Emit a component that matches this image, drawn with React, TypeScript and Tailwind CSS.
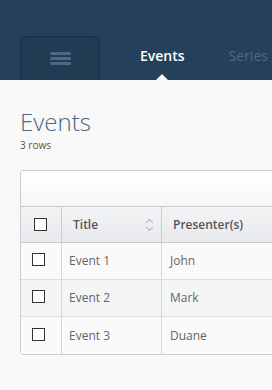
import React from 'react';

const rows = [
  { title: 'Event 1', presenter: 'John' },
  { title: 'Event 2', presenter: 'Mark' },
  { title: 'Event 3', presenter: 'Duane' },
];

const Box = ({ className = '' }: { className?: string }) => (
  <span className={`block w-[13px] h-[13px] border border-[#333] bg-white ${className}`} />
);

const App = () => {
  return (
    <div className="w-[272px] h-[390px] overflow-hidden bg-[#f8f8f8]" style={{ fontFamily: '"Open Sans", sans-serif' }}>
      <header className="h-[80px] bg-[#25405a] flex items-end pl-[20px]">
        <button className="w-[80px] h-[44px] rounded-t-[5px] border border-b-0 border-[#1b3046] bg-[#223b53] flex items-center justify-center">
          <span className="flex flex-col gap-[2px]">
            <span className="block w-[21px] h-[3px] rounded-sm bg-[#4b6985]" />
            <span className="block w-[21px] h-[3px] rounded-sm bg-[#4b6985]" />
            <span className="block w-[21px] h-[3px] rounded-sm bg-[#4b6985]" />
          </span>
        </button>
        <nav className="flex h-[44px] text-[14px] font-semibold">
          <div className="relative ml-[40px] pt-[9px] text-white">
            Events
            <span className="absolute left-1/2 -translate-x-1/2 bottom-0 w-0 h-0 border-l-[6px] border-r-[6px] border-b-[6px] border-l-transparent border-r-transparent border-b-[#f8f8f8]" />
          </div>
          <div className="ml-[44px] pt-[9px] font-normal text-[#4d6a87]">Series</div>
        </nav>
      </header>

      <div className="pl-[20px] pt-[28px]">
        <h1 className="text-[24px] leading-[28px] font-light text-[#46678a]">Events</h1>
        <p className="text-[10px] leading-[14px] text-[#555] mt-[2px]">3 rows</p>

        <div className="mt-[18px] w-[400px] border border-[#c9cdd2] rounded-[3px] bg-white overflow-hidden">
          <div className="h-[36px] bg-gradient-to-b from-white to-[#f6f6f6] border-b border-[#c9cdd2]" />
          <div className="flex h-[36px] bg-gradient-to-b from-[#f2f4f6] to-[#e7e9ec] border-b border-[#c9cdd2] text-[12px] font-semibold text-[#555]">
            <div className="w-[41px] flex items-center justify-center border-r border-[#c9cdd2]">
              <Box className="ml-[-2px] mt-[-1px]" />
            </div>
            <div className="w-[100px] flex items-center justify-between pl-[11px] pr-[7px] border-r border-[#c9cdd2]">
              <span>Title</span>
              <svg width="9" height="14" viewBox="0 0 9 14" fill="none" stroke="#b9bec4" strokeWidth="1.2">
                <path d="M1 5 L4.5 1.5 L8 5" />
                <path d="M1 9 L4.5 12.5 L8 9" />
              </svg>
            </div>
            <div className="flex-1 flex items-center pl-[11px]">Presenter(s)</div>
          </div>
          {rows.map((r, i) => (
            <div
              key={r.title}
              className={`flex h-[37px] text-[12px] text-[#666] ${i < rows.length - 1 ? 'border-b border-[#dcdfe2]' : ''} ${i === 1 ? 'bg-[#f4f5f5]' : 'bg-[#fafafa]'}`}
            >
              <div className="w-[41px] flex items-center pl-[11px] border-r border-[#d4d7da]">
                <Box className="mt-[-3px]" />
              </div>
              <div className="w-[100px] flex items-center pl-[7px] border-r border-[#d4d7da]">{r.title}</div>
              <div className="flex-1 flex items-center pl-[8px]">{r.presenter}</div>
            </div>
          ))}
        </div>
      </div>
    </div>
  );
};

export default App;
